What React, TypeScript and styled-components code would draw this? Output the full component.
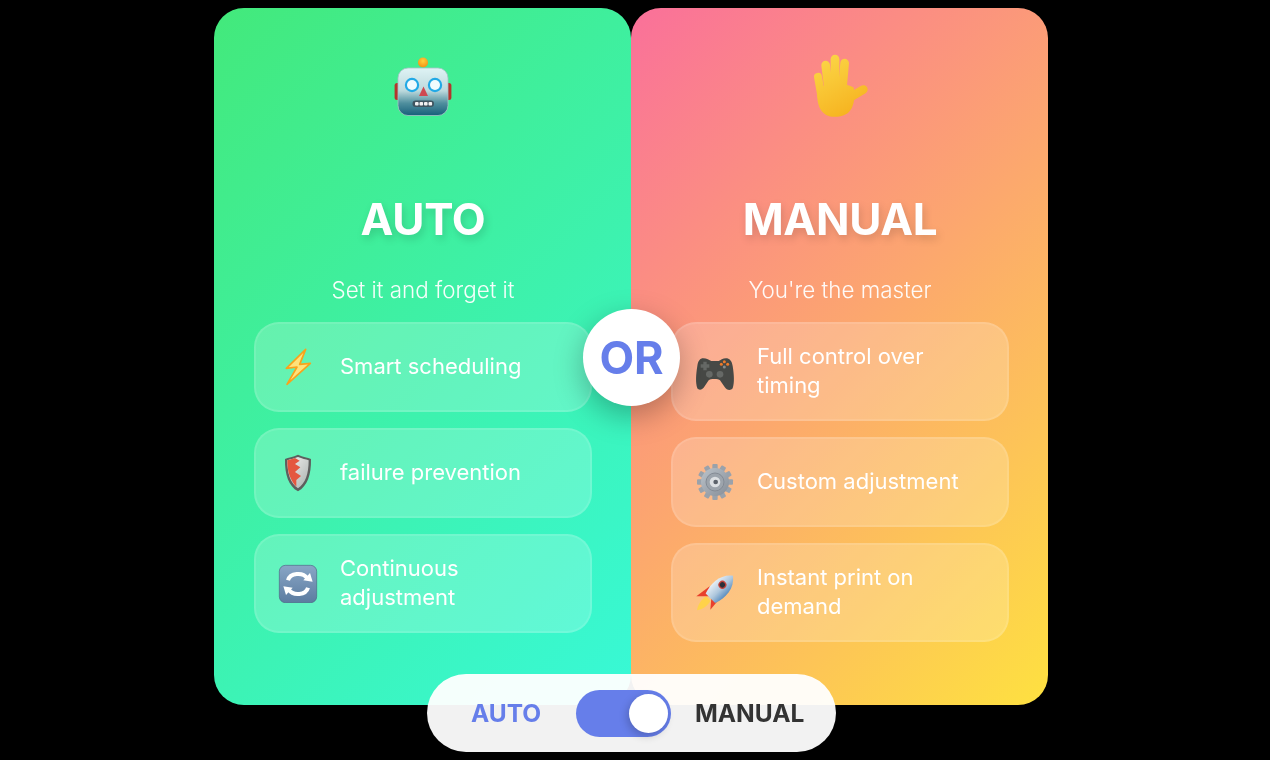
import React, { useState } from 'react';
import styled, { createGlobalStyle } from 'styled-components';

const GlobalStyle = createGlobalStyle`
  html, body {
    margin: 0;
    padding: 0;
    background: #000;
    font-family: Inter, "Noto Sans", "Liberation Sans", sans-serif;
  }
  * {
    box-sizing: border-box;
  }
`;

const Stage = styled.div`
  height: 760px;
  overflow: hidden;
  background: #000;
  display: flex;
  justify-content: center;
  align-items: flex-start;
  padding: 8px 8px 0 0;
  filter: blur(0.6px);
`;

const Comparison = styled.div`
  position: relative;
  display: grid;
  grid-template-columns: 417px 417px;
  height: 697px;
`;

const Panel = styled.section<{ $variant: 'auto' | 'manual' }>`
  display: flex;
  flex-direction: column;
  align-items: center;
  padding: 40px 39px 40px 40px;
  color: #fff;
  border-radius: 30px;
  background: ${(p) =>
    p.$variant === 'auto'
      ? 'linear-gradient(135deg, #43e97b 0%, #38f9d7 100%)'
      : 'linear-gradient(135deg, #fa709a 0%, #fee140 100%)'};
`;

const HeroIcon = styled.div`
  width: 78px;
  height: 78px;
  flex: none;
  display: flex;
  align-items: center;
  justify-content: center;
  margin-bottom: 67px;
`;

const Title = styled.h2`
  margin: 0 0 30px;
  font-size: 44px;
  line-height: 53px;
  font-weight: 700;
  letter-spacing: -0.3px;
  text-shadow: 2px 4px 8px rgba(0, 0, 0, 0.15);
`;

const Subtitle = styled.p`
  margin: 0 0 19px;
  font-size: 22.4px;
  line-height: 27px;
  font-weight: 300;
  opacity: 0.95;
`;

const FeatureList = styled.ul`
  list-style: none;
  margin: 0;
  padding: 0;
  width: 100%;
  display: flex;
  flex-direction: column;
  gap: 16px;
`;

const Feature = styled.li`
  display: flex;
  align-items: center;
  gap: 22px;
  padding: 18px 24px 20px 22px;
  border-radius: 25px;
  background: rgba(255, 255, 255, 0.2);
  border: 2px solid rgba(255, 255, 255, 0.1);
  font-size: 22px;
  line-height: 28.5px;
  font-weight: 400;
`;

const FeatureIcon = styled.span`
  width: 40px;
  height: 48px;
  flex: none;
  display: flex;
  align-items: center;
  justify-content: center;
`;

const OrBadge = styled.div`
  position: absolute;
  left: 369px;
  top: 301px;
  width: 97px;
  height: 97px;
  border-radius: 50%;
  background: #fff;
  color: #667eea;
  display: flex;
  align-items: center;
  justify-content: center;
  font-size: 45px;
  font-weight: 700;
  box-shadow: 0 10px 30px rgba(0, 0, 0, 0.28);
`;

const ToggleBar = styled.div`
  position: absolute;
  left: 213px;
  top: 666px;
  width: 409px;
  height: 78px;
  padding-left: 44px;
  border-radius: 39px;
  background: rgba(255, 255, 255, 0.95);
  display: flex;
  align-items: center;
  gap: 24px;
`;

const ToggleLabel = styled.span<{ $active?: boolean }>`
  font-size: 24.5px;
  font-weight: 700;
  min-width: ${(p) => (p.$active ? '81px' : '0')};
  color: ${(p) => (p.$active ? '#667eea' : '#333')};
`;

const Switch = styled.button<{ $on: boolean }>`
  width: 95px;
  height: 47px;
  flex: none;
  padding: 0 3px;
  border: none;
  border-radius: 24px;
  background: #667eea;
  display: flex;
  align-items: center;
  justify-content: ${(p) => (p.$on ? 'flex-end' : 'flex-start')};
  cursor: pointer;
`;

const Knob = styled.span`
  width: 39px;
  height: 39px;
  border-radius: 50%;
  background: #fff;
  box-shadow: -2px 3px 8px rgba(0, 0, 0, 0.2);
`;

const RobotIcon = () => (
  <svg width="60" height="60" viewBox="0 0 60 60">
    <defs>
      <linearGradient id="robotHead" x1="0" y1="0" x2="0" y2="1">
        <stop offset="0" stopColor="#dff3f5" />
        <stop offset="0.48" stopColor="#bcd9dc" />
        <stop offset="0.74" stopColor="#4f8f9e" />
        <stop offset="1" stopColor="#17607a" />
      </linearGradient>
      <radialGradient id="robotBulb" cx="0.5" cy="0.35" r="0.7">
        <stop offset="0" stopColor="#ffd23c" />
        <stop offset="1" stopColor="#f48a10" />
      </radialGradient>
    </defs>
    <rect x="1.6" y="26" width="6" height="17" rx="2.5" fill="#b3342c" />
    <rect x="52.4" y="26" width="6" height="17" rx="2.5" fill="#b3342c" />
    <path d="M24 15 C24 10.5 36 10.5 36 15 Z" fill="#7a5a96" />
    <circle cx="30" cy="5.5" r="5" fill="url(#robotBulb)" />
    <rect x="5" y="11" width="50" height="47.5" rx="10" fill="url(#robotHead)" stroke="#a6c2c6" strokeWidth="0.8" />
    <circle cx="19" cy="28" r="7.2" fill="#22a9e6" />
    <circle cx="19" cy="28" r="5" fill="#f1fbfd" />
    <circle cx="42" cy="28" r="7.2" fill="#22a9e6" />
    <circle cx="42" cy="28" r="5" fill="#f1fbfd" />
    <path d="M30.5 29.5 L35 39 H26 Z" fill="#cf4a52" />
    <rect x="19.5" y="43.5" width="21.5" height="6.5" rx="3.2" fill="#3f5560" />
    <rect x="22" y="45" width="3.6" height="3.6" rx="1" fill="#f2f2f2" />
    <rect x="26.5" y="45" width="3.6" height="3.6" rx="1" fill="#f2f2f2" />
    <rect x="31" y="45" width="3.6" height="3.6" rx="1" fill="#f2f2f2" />
    <rect x="35.5" y="45" width="3.6" height="3.6" rx="1" fill="#f2f2f2" />
  </svg>
);

const HandIcon = () => (
  <svg width="60" height="67" viewBox="44 25 180 200">
    <defs>
      <linearGradient id="handFill" gradientUnits="userSpaceOnUse" x1="70" y1="30" x2="170" y2="210">
        <stop offset="0" stopColor="#fbd748" />
        <stop offset="1" stopColor="#f6b21e" />
      </linearGradient>
    </defs>
    <g stroke="url(#handFill)" strokeLinecap="round" fill="none">
      <path d="M68 93 L78 150" strokeWidth="24" />
      <path d="M91 58 L100 130" strokeWidth="26" />
      <path d="M119 40 L119 130" strokeWidth="26" />
      <path d="M148 52 L141 130" strokeWidth="26" />
      <path d="M155 160 L204 131" strokeWidth="26" />
    </g>
    <path d="M66 130 C90 110 150 108 175 125 C182 175 170 213 118 213 C78 213 62 180 66 130 Z" fill="url(#handFill)" />
  </svg>
);

const BoltIcon = () => (
  <svg width="40" height="40" viewBox="83 105 120 120">
    <path d="M166 115 L108 172 L140 168 L110 220 L180 157 L148 160 Z" fill="#ffe27a" stroke="#f8a31c" strokeWidth="5" strokeLinejoin="round" />
  </svg>
);

const ShieldIcon = () => (
  <svg width="40" height="40" viewBox="83 422 120 120">
    <defs>
      <linearGradient id="shieldSteel" x1="0" y1="0" x2="1" y2="1">
        <stop offset="0" stopColor="#f4f4f2" />
        <stop offset="1" stopColor="#a9b0ae" />
      </linearGradient>
    </defs>
    <path d="M143 430 C128 437 114 438 104 443 C103 490 115 525 143 540 C171 525 183 490 182 443 C172 438 158 437 143 430 Z" fill="#5d5f5e" />
    <path d="M143 437 C130 442 120 444 111 447 C111 488 121 517 143 531 C165 517 175 488 175 447 C166 444 156 442 143 437 Z" fill="url(#shieldSteel)" />
    <path d="M134 440 C126 443 118 445 111 447 C111 480 118 505 138 526 L138 506 L152 494 L134 482 L150 468 L134 458 L148 448 Z" fill="#e4573f" />
  </svg>
);

const SyncIcon = () => (
  <svg width="40" height="40" viewBox="82 756 120 120">
    <defs>
      <linearGradient id="syncTile" x1="0" y1="0" x2="0" y2="1">
        <stop offset="0" stopColor="#89a6c6" />
        <stop offset="1" stopColor="#5c7ca0" />
      </linearGradient>
    </defs>
    <rect x="86" y="763" width="112" height="112" rx="18" fill="url(#syncTile)" stroke="#4d6685" strokeWidth="2" />
    <g fill="none" stroke="#fff" strokeWidth="12">
      <path d="M112 808 C118 786 156 782 170 802" />
      <path d="M172 830 C166 852 128 856 114 836" />
    </g>
    <path d="M158 808 L186 812 L178 786 Z" fill="#fff" />
    <path d="M126 830 L98 826 L106 852 Z" fill="#fff" />
  </svg>
);

const GamepadIcon = () => (
  <svg width="40" height="40" viewBox="105 120 120 120">
    <path
      d="M130 142 C120 142 114 150 112 165 C108 190 106 215 112 232 C118 240 128 236 134 226 L146 208 C150 203 176 203 180 208 L194 228 C200 238 212 240 218 232 C224 215 222 190 218 165 C216 150 208 142 198 142 C188 142 182 148 176 150 L154 150 C148 148 140 142 130 142 Z"
      fill="#474946"
    />
    <path d="M130 152 H140 V160 H148 V170 H140 V178 H130 V170 H122 V160 H130 Z" fill="#666966" />
    <circle cx="148" cy="190" r="10" fill="#666966" />
    <circle cx="180" cy="190" r="10" fill="#666966" />
    <circle cx="193" cy="152" r="4.5" fill="#ee7a2a" />
    <circle cx="203" cy="160" r="4.5" fill="#ee7a2a" />
    <circle cx="184" cy="160" r="4.5" fill="#ee7a2a" />
    <circle cx="193" cy="168" r="4.5" fill="#8a8c8a" />
  </svg>
);

const GearIcon = () => (
  <svg width="40" height="40" viewBox="103 449 120 120">
    <defs>
      <linearGradient id="gearBody" x1="0" y1="0" x2="1" y2="1">
        <stop offset="0" stopColor="#bcc3ca" />
        <stop offset="1" stopColor="#858d97" />
      </linearGradient>
    </defs>
    {Array.from({ length: 12 }, (_, i) => (
      <rect key={i} x="155" y="458" width="16" height="22" rx="3" fill="#9aa2ab" transform={`rotate(${i * 30} 163 512)`} />
    ))}
    <circle cx="163" cy="512" r="42" fill="url(#gearBody)" />
    <circle cx="163" cy="512" r="27" fill="#9da4ac" stroke="#848b95" strokeWidth="3" />
    <circle cx="163" cy="512" r="16" fill="#dcdfe2" />
    <circle cx="165" cy="512" r="7" fill="#5c626a" />
  </svg>
);

const RocketIcon = () => (
  <svg width="40" height="40" viewBox="106 783 120 120">
    <defs>
      <linearGradient id="rocketBody" x1="0" y1="0" x2="1" y2="0">
        <stop offset="0" stopColor="#e6eef5" />
        <stop offset="0.55" stopColor="#aec7dd" />
        <stop offset="1" stopColor="#5c8fc0" />
      </linearGradient>
    </defs>
    <path d="M140 856 C125 866 115 880 112 898 C130 895 144 884 152 870 Z" fill="#ffd24a" />
    <path d="M150 826 L110 856 L150 856 Z" fill="#e8402c" />
    <path d="M186 856 L152 896 L156 850 Z" fill="#e8402c" />
    <g transform="translate(172 842) rotate(45)">
      <path d="M0 -68 C30 -44 32 -6 20 28 L-20 28 C-32 -6 -30 -44 0 -68 Z" fill="url(#rocketBody)" />
      <circle cx="-3" cy="-26" r="12" fill="#c4423a" />
      <circle cx="-3" cy="-26" r="8" fill="#2b2f3a" />
    </g>
  </svg>
);

const comparison = [
  {
    variant: 'auto' as const,
    hero: <RobotIcon />,
    title: 'AUTO',
    subtitle: 'Set it and forget it',
    features: [
      { icon: <BoltIcon />, label: 'Smart scheduling' },
      { icon: <ShieldIcon />, label: 'failure prevention' },
      { icon: <SyncIcon />, label: 'Continuous adjustment' },
    ],
  },
  {
    variant: 'manual' as const,
    hero: <HandIcon />,
    title: 'MANUAL',
    subtitle: "You're the master",
    features: [
      { icon: <GamepadIcon />, label: 'Full control over timing' },
      { icon: <GearIcon />, label: 'Custom adjustment' },
      { icon: <RocketIcon />, label: 'Instant print on demand' },
    ],
  },
];

export default function App() {
  const [manual, setManual] = useState(true);

  return (
    <>
      <GlobalStyle />
      <Stage>
        <Comparison>
          {comparison.map((side) => (
            <Panel key={side.variant} $variant={side.variant}>
              <HeroIcon>{side.hero}</HeroIcon>
              <Title>{side.title}</Title>
              <Subtitle>{side.subtitle}</Subtitle>
              <FeatureList>
                {side.features.map((feature) => (
                  <Feature key={feature.label}>
                    <FeatureIcon>{feature.icon}</FeatureIcon>
                    <span>{feature.label}</span>
                  </Feature>
                ))}
              </FeatureList>
            </Panel>
          ))}
          <OrBadge>OR</OrBadge>
          <ToggleBar>
            <ToggleLabel $active>AUTO</ToggleLabel>
            <Switch $on={manual} onClick={() => setManual(!manual)} aria-label="Toggle mode">
              <Knob />
            </Switch>
            <ToggleLabel>MANUAL</ToggleLabel>
          </ToggleBar>
        </Comparison>
      </Stage>
    </>
  );
}
